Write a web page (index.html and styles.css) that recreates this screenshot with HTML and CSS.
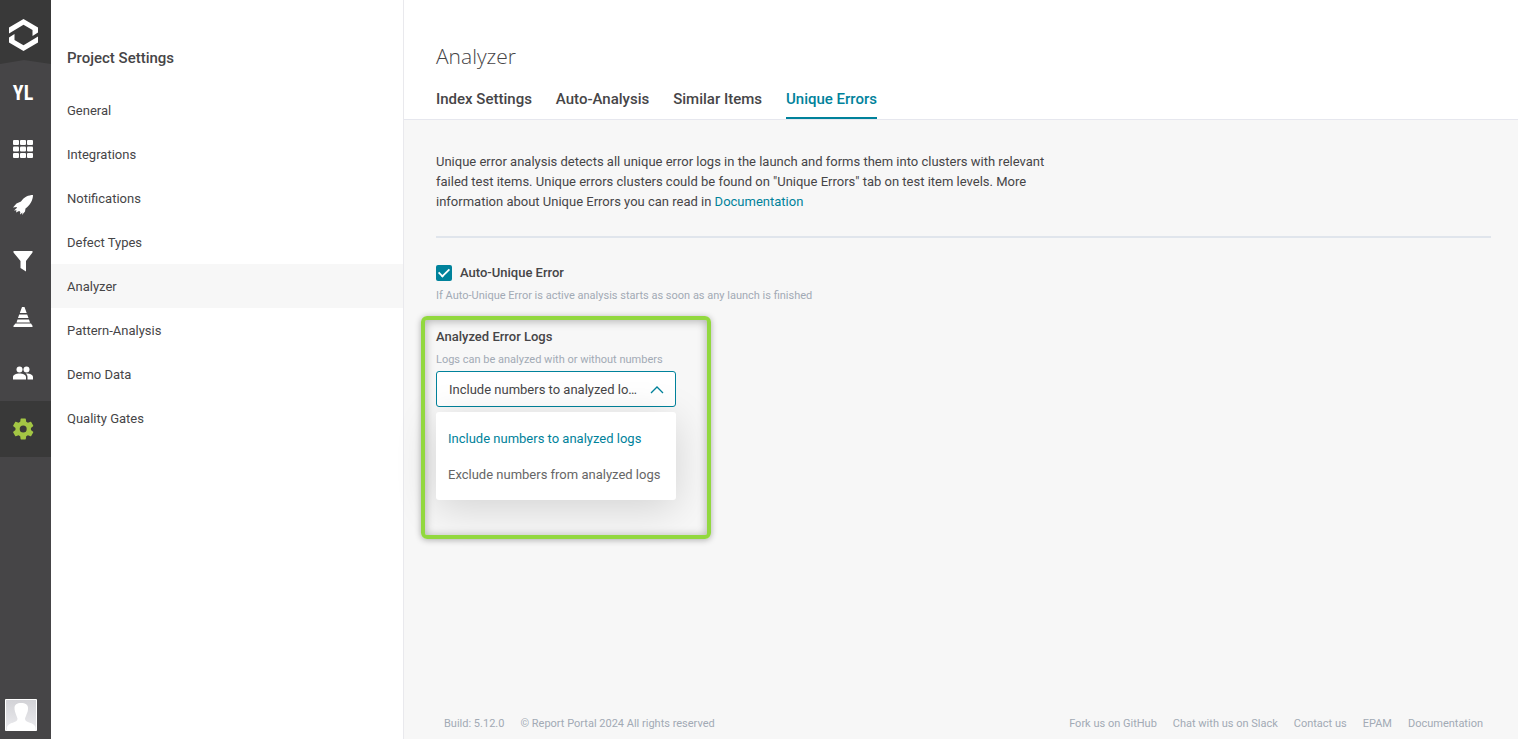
FILE: index.html
```html
<!DOCTYPE html>
<html lang="en">
<head>
<meta charset="utf-8">
<meta name="viewport" content="width=device-width, initial-scale=1">
<title>Project Settings - Analyzer</title>
<link rel="stylesheet" href="styles.css">
</head>
<body>
<div class="app">
  <nav class="rail" aria-label="Main">
    <a class="rail-logo" href="#" aria-label="Home">
      <svg width="51" height="66" viewBox="0 0 51 66" aria-hidden="true">
        <path fill="#393939" d="M0 0h51v64L24 60 0 64z"/>
        <path fill="#fff" d="M9 27.500L23.500 19 38 27.500v5L32.500 36v-6l-9-5.200L9 33.500zM38 42.500L23.500 51 9 42.500v-5l5.500-3.500v6l9 5.200L38 36.500z"/>
      </svg>
    </a>
    <a class="rail-item rail-project" href="#">YL</a>
    <a class="rail-item" href="#" aria-label="Dashboards">
      <svg width="22" height="20" viewBox="0 0 22 20" fill="#fff" aria-hidden="true">
        <rect x="1" y="1" width="6" height="5" rx="1"/><rect x="8" y="1" width="6" height="5" rx="1"/><rect x="15" y="1" width="6" height="5" rx="1"/>
        <rect x="1" y="7.500" width="6" height="5" rx="1"/><rect x="8" y="7.500" width="6" height="5" rx="1"/><rect x="15" y="7.500" width="6" height="5" rx="1"/>
        <rect x="1" y="14" width="6" height="5" rx="1"/><rect x="8" y="14" width="6" height="5" rx="1"/><rect x="15" y="14" width="6" height="5" rx="1"/>
      </svg>
    </a>
    <a class="rail-item" href="#" aria-label="Launches">
      <svg width="22" height="22" viewBox="0 0 22 22" fill="#fff" aria-hidden="true">
        <path d="M21 1c-4.500 0-9 2-12 6.500L4.500 9.500 1 13.500l4-.5-.5 1.200L2 16.500l2.500-.3L4 18.500l2.500-1.200.8-.3 1 1-.3 2.500 2.500-2L10 21l3-3.500.5-3C18 11.500 21 6 21 1z"/>
      </svg>
    </a>
    <a class="rail-item" href="#" aria-label="Filters">
      <svg width="22" height="22" viewBox="0 0 22 22" fill="#fff" aria-hidden="true">
        <path d="M1.500 1h19v1.500L14 11v10.500L8.500 18v-7L1.500 2.500z"/>
      </svg>
    </a>
    <a class="rail-item" href="#" aria-label="Debug">
      <svg width="22" height="22" viewBox="0 0 22 22" fill="#fff" aria-hidden="true">
        <path d="M10 1h2.500l2.200 6H7.800zM7.200 8.500h8l1.300 3.500H6zM5.500 13.500h11.500l1 3H4.500zM3.500 17.500h15.500l1.500 2.200V21h-19v-1.300z"/>
      </svg>
    </a>
    <a class="rail-item" href="#" aria-label="Members">
      <svg width="22" height="16" viewBox="0 0 22 16" fill="#fff" aria-hidden="true">
        <circle cx="7.500" cy="4.500" r="3"/><circle cx="14.500" cy="4.500" r="3"/>
        <path d="M1 14.500V12c0-2.200 3-3.500 6.500-3.500S14 9.800 14 12v2.500zM15.500 14.500V12c0-1.300-.6-2.500-1.800-3.400 4-.2 7.300 1.200 7.300 3.400v2.500z"/>
      </svg>
    </a>
    <a class="rail-item rail-active" href="#" aria-label="Project settings" aria-current="page">
      <svg width="24" height="24" viewBox="0 0 24 24" fill="#a3c644" aria-hidden="true">
        <path d="M19.900 13c.1-.7.1-1.300 0-2l2.200-1.700c.2-.2.300-.5.100-.7l-2-3.600c-.1-.2-.4-.3-.7-.2l-2.600 1c-.5-.4-1.100-.8-1.700-1l-.4-2.700c0-.3-.3-.5-.5-.5h-4.200c-.3 0-.5.200-.5.500l-.4 2.700c-.6.300-1.200.6-1.700 1l-2.600-1c-.3-.1-.6 0-.7.200l-2 3.600c-.2.200-.1.600.1.700L4.500 11c-.1.700-.1 1.300 0 2l-2.200 1.700c-.2.200-.3.500-.1.700l2 3.600c.1.200.4.300.7.200l2.600-1c.5.400 1.100.8 1.700 1l.4 2.700c0 .3.200.5.500.5h4.200c.2 0 .5-.2.500-.5l.4-2.700c.6-.3 1.200-.6 1.700-1l2.600 1c.3.100.6 0 .7-.2l2-3.600c.2-.2.100-.6-.1-.7zM12.200 15.500a3.500 3.500 0 1 1 0-7 3.500 3.500 0 0 1 0 7z"/>
      </svg>
    </a>
    <a class="rail-avatar" href="#" aria-label="Profile">
      <svg width="32" height="32" viewBox="0 0 32 32" aria-hidden="true">
        <defs><linearGradient id="avatar-bg" x1="0" y1="0" x2="0" y2="1"><stop offset="0" stop-color="#d2d2d6"/><stop offset="1" stop-color="#ececef"/></linearGradient></defs>
        <path fill="url(#avatar-bg)" stroke="#fff" d="M.5.500h31v31H.5z"/>
        <path fill="#fff" d="M9.500 9c0-3.500 2.500-5 6.500-5 4.500 0 7 1.500 7 5 0 4-1 5-1.500 6.500-.5 2-1.500 3-1.500 4.500 0 4 9 3 10.500 8v4H2v-4c1.500-5 10.500-4 10.500-8 0-1.500-1-2.500-1.500-4.500C10.500 14 9.500 12 9.500 9z"/>
      </svg>
    </a>
  </nav>

  <aside class="settings">
    <h2 class="settings-title">Project Settings</h2>
    <nav class="settings-nav" aria-label="Project settings">
      <a href="#">General</a>
      <a href="#">Integrations</a>
      <a href="#">Notifications</a>
      <a href="#">Defect Types</a>
      <a class="current" href="#" aria-current="page">Analyzer</a>
      <a href="#">Pattern-Analysis</a>
      <a href="#">Demo Data</a>
      <a href="#">Quality Gates</a>
    </nav>
  </aside>

  <div class="page">
    <header class="page-header">
      <h1 class="page-title">Analyzer</h1>
      <nav class="tabs" aria-label="Analyzer sections">
        <a href="#">Index Settings</a>
        <a href="#">Auto-Analysis</a>
        <a href="#">Similar Items</a>
        <a class="current" href="#" aria-current="page">Unique Errors</a>
      </nav>
    </header>

    <main class="content">
      <p class="intro">Unique error analysis detects all unique error logs in the launch and forms them into clusters with relevant failed test items. Unique errors clusters could be found on "Unique Errors" tab on test item levels. More information about Unique Errors you can read in <a href="#">Documentation</a></p>
      <form class="form">
        <div class="field">
          <label class="check"><input type="checkbox" checked>Auto-Unique Error</label>
          <p class="hint">If Auto-Unique Error is active analysis starts as soon as any launch is finished</p>
        </div>
        <div class="field logs">
          <label class="field-label" for="logs">Analyzed Error Logs</label>
          <p class="hint">Logs can be analyzed with or without numbers</p>
          <div class="dropdown">
            <select id="logs">
              <option>Include numbers to analyzed logs</option>
              <option>Exclude numbers from analyzed logs</option>
            </select>
            <svg class="chevron" width="14" height="8" viewBox="0 0 14 8" fill="none" stroke="#00829b" stroke-width="1.300" aria-hidden="true"><path d="M1 7l6-6 6 6"/></svg>
            <div class="menu">
              <button class="selected" type="button">Include numbers to analyzed logs</button>
              <button type="button">Exclude numbers from analyzed logs</button>
            </div>
          </div>
        </div>
      </form>
    </main>

    <footer class="footer">
      <span>Build: 5.12.0</span>
      <span>© Report Portal 2024 All rights reserved</span>
      <nav class="footer-links" aria-label="Footer">
        <a href="#">Fork us on GitHub</a>
        <a href="#">Chat with us on Slack</a>
        <a href="#">Contact us</a>
        <a href="#">EPAM</a>
        <a href="#">Documentation</a>
      </nav>
    </footer>
  </div>
</div>
</body>
</html>
```

FILE: styles.css
```css
* { box-sizing: border-box; }
body {
  margin: 0;
  font: 13px/20px Roboto, "Liberation Sans", sans-serif;
  color: #464547;
}
a { color: inherit; text-decoration: none; }
h1, h2, p { margin: 0; }
svg { display: block; }

.app { display: flex; min-height: 100vh; }

.rail {
  display: flex;
  flex-direction: column;
  flex: none;
  width: 51px;
  background: #464547;
}
.rail-logo { height: 65px; }
.rail-item {
  display: flex;
  align-items: center;
  justify-content: center;
  height: 56px;
  padding: 0 5px 1px 0;
}
.rail-project {
  color: #fff;
  font: bold 20px/24px "Roboto Condensed", "Liberation Sans Narrow", Roboto, sans-serif;
}
.rail-active { background: #393939; }
.rail-avatar { margin: auto 0 8px 5px; }

.settings {
  flex: none;
  width: 353px;
  padding-top: 48px;
  border-right: 1px solid #e9e9ed;
  background: #fff;
}
.settings-title {
  padding-left: 16px;
  font-size: 15px;
  line-height: 20px;
  font-weight: 500;
}
.settings-nav { display: flex; flex-direction: column; margin-top: 20px; }
.settings-nav a { padding: 13px 16px 11px; }
.settings-nav .current { background: #f7f7f7; }

.page {
  display: flex;
  flex-direction: column;
  flex: 1;
  min-width: 0;
  background: #f7f7f7;
}
.page-header {
  padding: 40px 32px 0;
  border-bottom: 1px solid #e6e7ee;
  background: #fff;
}
.page-title {
  font: 300 21px/32px "Open Sans", "Noto Sans", sans-serif;
}
.tabs { display: flex; gap: 24px; margin-top: 17px; }
.tabs a {
  height: 30px;
  border-bottom: 2px solid transparent;
  font-size: 15px;
  font-weight: 500;
}
.tabs .current { color: #00829b; border-color: #00829b; }

.content { flex: 1; padding: 32px 27px 0 32px; }
.intro { max-width: 620px; }
.intro a { color: #00829b; }
.form {
  display: flex;
  flex-direction: column;
  gap: 23px;
  margin-top: 24px;
  padding-top: 25px;
  border-top: 2px solid #e0e5ec;
}
.check { display: flex; align-items: center; gap: 8px; font-weight: 500; }
.check input {
  appearance: none;
  width: 16px;
  height: 16px;
  margin: 0;
  border-radius: 2px;
  background: #00829b;
  display: grid;
  place-items: center;
}
.check input:checked::before {
  content: "";
  width: 10px;
  height: 5px;
  margin-bottom: 3px;
  border: solid #fff;
  border-width: 0 0 2px 2px;
  transform: rotate(-45deg) scale(.9);
}
.hint { margin-top: 5px; font-size: 11px; line-height: 16px; color: #a2aab5; }
.field-label { display: block; font-weight: 500; }

.logs { position: relative; width: 240px; }
.logs::after {
  content: "";
  position: absolute;
  inset: -11px -35px -132px -15px;
  border: 4px solid #92d83f;
  border-radius: 6px;
  box-shadow: 0 1px 6px rgba(0, 0, 0, .3), inset 0 1px 10px rgba(0, 0, 0, .3);
  pointer-events: none;
}
.dropdown { position: relative; margin-top: 3px; }
.dropdown select {
  display: block;
  appearance: none;
  width: 100%;
  height: 36px;
  padding: 2px 37px 0 12px;
  border: 1px solid #00829b;
  border-radius: 3px;
  background: #fff;
  color: inherit;
  font: inherit;
  text-overflow: ellipsis;
}
.chevron { position: absolute; right: 12px; top: 15px; pointer-events: none; }
.menu {
  position: absolute;
  top: 100%;
  left: 0;
  width: 100%;
  margin-top: 5px;
  padding: 8px 0;
  border-radius: 3px;
  background: #fff;
  box-shadow: 0 8px 40px rgba(0, 0, 0, .15);
}
.menu button {
  display: block;
  width: 100%;
  height: 36px;
  padding: 2px 12px 0;
  border: 0;
  background: none;
  color: #666;
  font: inherit;
  text-align: left;
  white-space: nowrap;
}
.menu .selected { color: #00829b; }

.footer {
  display: flex;
  gap: 16px;
  padding: 0 35px 7px 40px;
  font-size: 11px;
  line-height: 16px;
  color: #a2aab5;
}
.footer-links { display: flex; gap: 16px; margin-left: auto; }
```
